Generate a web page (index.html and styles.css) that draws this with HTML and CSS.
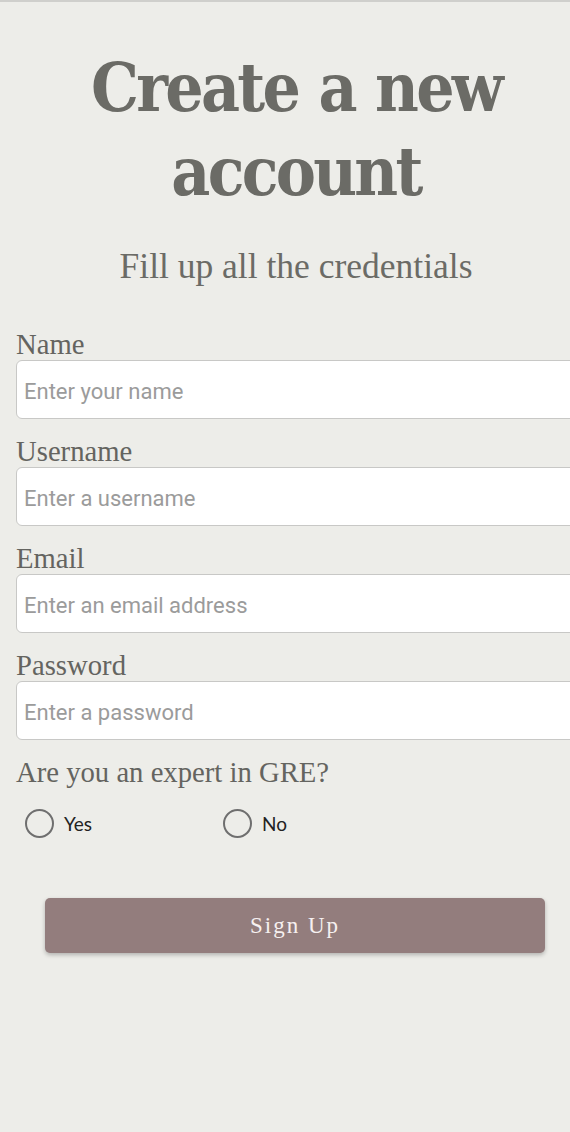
FILE: index.html
```html
<!DOCTYPE html>
<html lang="en">
<head>
<meta charset="utf-8">
<title>Create a new account</title>
<link rel="stylesheet" href="styles.css">
</head>
<body>
<main class="page">
  <header class="intro">
    <h1 class="title">Create a new account</h1>
    <p class="subtitle">Fill up all the credentials</p>
  </header>
  <form class="form">
    <div class="field">
      <label class="label" for="name">Name</label>
      <input class="input" id="name" type="text" placeholder="Enter your name">
    </div>
    <div class="field">
      <label class="label" for="username">Username</label>
      <input class="input" id="username" type="text" placeholder="Enter a username">
    </div>
    <div class="field">
      <label class="label" for="email">Email</label>
      <input class="input" id="email" type="email" placeholder="Enter an email address">
    </div>
    <div class="field">
      <label class="label" for="password">Password</label>
      <input class="input" id="password" type="password" placeholder="Enter a password">
    </div>
    <p class="label question">Are you an expert in GRE?</p>
    <div class="radios">
      <label class="radio"><span class="circle"></span><span class="radio-text">Yes</span></label>
      <label class="radio"><span class="circle"></span><span class="radio-text">No</span></label>
    </div>
    <div class="actions">
      <button class="button" type="button">Sign Up</button>
    </div>
  </form>
</main>
</body>
</html>
```
FILE: styles.css
```css
html, body {
  margin: 0;
  padding: 0;
}
body {
  background: #edede9;
  border-top: 2px solid #cfcfcc;
  overflow: hidden;
  height: 1130px;
}
.page {
  padding: 0 0 0 16px;
}
.intro {
  text-align: center;
  margin-right: -6px;
}
.title {
  margin: 0;
  padding-top: 44px;
  font-family: "DejaVu Serif", serif;
  font-stretch: condensed;
  font-weight: bold;
  font-size: 67px;
  line-height: 84px;
  color: #6b6b66;
  letter-spacing: -2.7px;
  word-spacing: 2px;
}
.subtitle {
  margin: 32px 0 0;
  font-family: "Liberation Serif", serif;
  font-size: 35.5px;
  line-height: 40px;
  color: #6b6b66;
}
.form {
  margin-top: 42px;
}
.field {
  display: flex;
  flex-direction: column;
  margin-bottom: 16px;
}
.label {
  font-family: "Liberation Serif", serif;
  font-size: 28.7px;
  line-height: 32px;
  color: #646460;
}
.input {
  box-sizing: border-box;
  width: 570px;
  height: 59px;
  margin: 0;
  padding: 4px 7px 0;
  border: 1.5px solid #c8c8c6;
  border-radius: 6px;
  background: #fff;
  font-family: Roboto, sans-serif;
  font-size: 22px;
  color: #333;
  outline: none;
}
.input::placeholder {
  color: #9b9b9b;
}
.question {
  margin: 15px 0 0;
}
.radios {
  display: grid;
  grid-template-columns: 198px 198px;
  margin: 21px 0 0 9px;
}
.radio {
  display: flex;
  align-items: center;
  gap: 10px;
  height: 28px;
}
.circle {
  box-sizing: border-box;
  width: 29px;
  height: 29px;
  border: 2.5px solid #6f6f6f;
  border-radius: 50%;
}
.radio-text {
  font-family: Lato, "Noto Sans", sans-serif;
  font-size: 19px;
  color: #222;
}
.actions {
  margin: 61px 0 0 29px;
}
.button {
  display: block;
  width: 500px;
  height: 55px;
  border: none;
  border-radius: 5px;
  background: #937d7d;
  box-shadow: 0 2px 4px rgba(0, 0, 0, 0.25);
  font-family: "Liberation Serif", serif;
  font-size: 23px;
  letter-spacing: 2px;
  color: #f6f0f0;
}
```
